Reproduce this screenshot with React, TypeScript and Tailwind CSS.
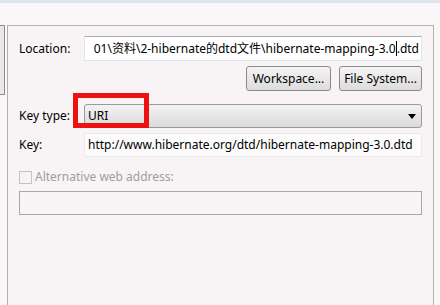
const FONT = "font-['Noto_Sans','Noto_Sans_CJK_SC',sans-serif]";

function Button({ label, width }: { label: string; width: string }) {
  return (
    <button
      className={`${width} h-[25px] rounded-[3px] border border-[#8a8a8a] bg-gradient-to-b from-[#f4f4f4] to-[#dcdcdc] text-[12px] text-black leading-none`}
    >
      {label}
    </button>
  );
}

export default function App() {
  return (
    <div className={`${FONT} relative w-[440px] h-[305px] overflow-hidden bg-[#fbf6f7] text-[12px] text-black`}>
      <div className="h-[3px] bg-[#dce4ec]" />
      <div className="h-[22px]" />
      <div className="flex h-[280px]">
        <div className="w-[7px] flex flex-col">
          <div className="h-[70px] w-[5px] border border-l-0 border-[#8c8c8c] bg-[#e8e8e8]" />
        </div>
        <div className="flex-1 mr-[6px] border-l border-t border-r border-[#b4b0b2] bg-[#f8f4f5] px-[11px] pt-[10px]">
          <div className="grid grid-cols-[65px_1fr] items-center">
            <span className="pt-[1px]">Location:</span>
            <div className="h-[25px] flex items-center justify-end overflow-hidden whitespace-nowrap border border-[#dde5ee] border-t-[#abadb3] bg-white pr-[2px]">
              <span>01\资料\2-hibernate的dtd文件\hibernate-mapping-3.0</span>
              <span className="h-[15px] border-l border-black" />
              <span>.dtd</span>
            </div>
          </div>
          <div className="flex justify-end gap-[8px] mt-[5px]">
            <Button label="Workspace..." width="w-[85px]" />
            <Button label="File System..." width="w-[83px]" />
          </div>
          <div className="grid grid-cols-[65px_1fr] items-center mt-[13px]">
            <span>Key type:</span>
            <div className="h-[24px] flex items-center justify-between rounded-[3px] border border-[#9a9a9a] bg-gradient-to-b from-[#f3f3f3] to-[#dadada] pl-[3px] pr-[5px]">
              <span>URI</span>
              <svg width="8" height="5" viewBox="0 0 8 5">
                <path d="M0 0h8L4 5z" fill="#000" />
              </svg>
            </div>
          </div>
          <div className="grid grid-cols-[65px_1fr] items-center mt-[5px]">
            <span>Key:</span>
            <div className="h-[24px] flex items-center overflow-hidden whitespace-nowrap border border-[#ece9ea] bg-[#fcfbfb] pl-[3px]">
              http://www.hibernate.org/dtd/hibernate-mapping-3.0.dtd
            </div>
          </div>
          <div className="flex items-center mt-[13px] h-[14px]">
            <span className="w-[13px] h-[13px] border border-[#c4c2c3] bg-[#f6f3f4]" />
            <span className="ml-[3px] text-[#a09c9e]">Alternative web address:</span>
          </div>
          <div className="h-[24px] mt-[7px] border border-[#aaa7a8] bg-[#f8f4f5]" />
        </div>
      </div>
      <div className="absolute left-[73px] top-[93px] w-[76px] h-[35px] border-[5px] border-[#ee1111]" />
    </div>
  );
}
